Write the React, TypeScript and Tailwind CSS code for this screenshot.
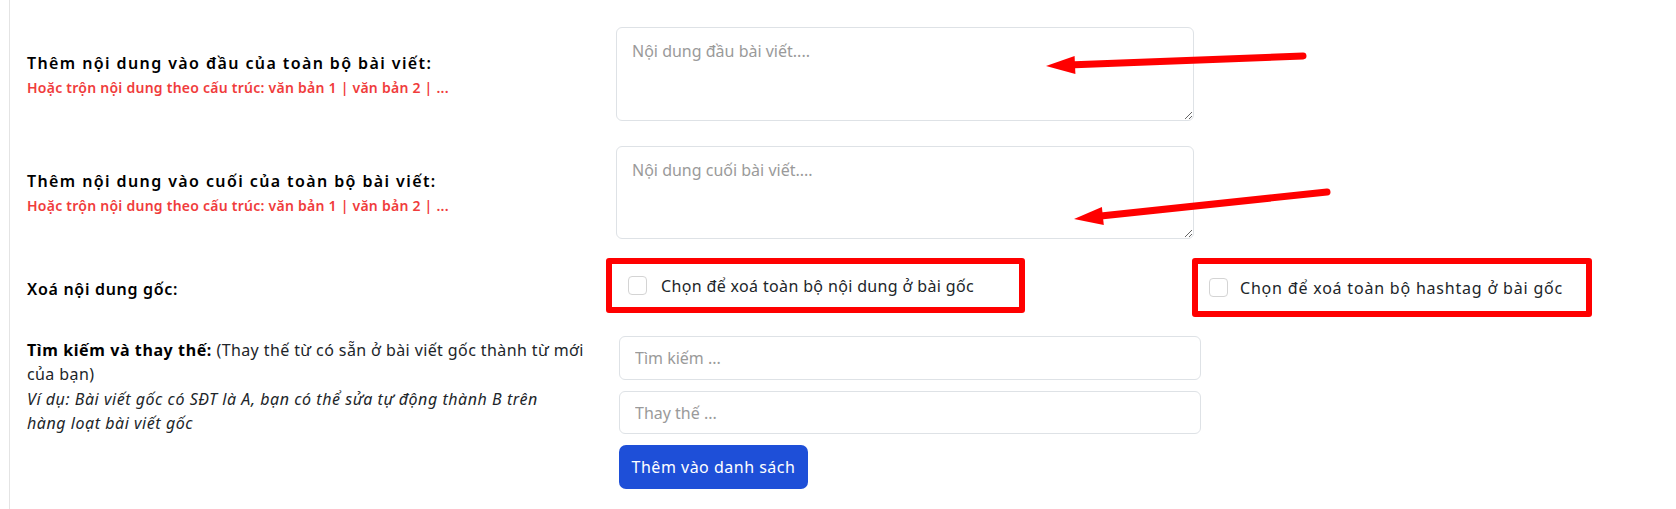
export default function App() {
  return (
    <div className="relative h-[509px] w-full overflow-hidden bg-white font-['Noto_Sans',sans-serif] text-black">
      <div className="ml-[9px] h-full border-l border-[#e4e4e4] pl-[17px] pt-[27px]">
        {/* Nội dung đầu */}
        <div className="flex items-center">
          <div className="w-[589px]">
            <div className="text-[16px] font-semibold leading-[22px] tracking-[1.4px]">Thêm nội dung vào đầu của toàn bộ bài viết:</div>
            <div className="mt-[5px] text-[14px] font-semibold leading-[18px] tracking-[0.25px] text-[#f03c3c]">
              Hoặc trộn nội dung theo cấu trúc: văn bản 1 | văn bản 2 | ...
            </div>
          </div>
          <textarea
            placeholder="Nội dung đầu bài viết...."
            className="h-[94px] w-[578px] rounded-[6px] border border-[#dee2e6] px-[15px] py-[11px] text-[16px] leading-[24px] outline-none placeholder:text-[#9a9a9a]"
          />
        </div>

        {/* Nội dung cuối */}
        <div className="mt-[25px] flex items-center">
          <div className="w-[589px]">
            <div className="text-[16px] font-semibold leading-[22px] tracking-[1.4px]">Thêm nội dung vào cuối của toàn bộ bài viết:</div>
            <div className="mt-[5px] text-[14px] font-semibold leading-[18px] tracking-[0.25px] text-[#f03c3c]">
              Hoặc trộn nội dung theo cấu trúc: văn bản 1 | văn bản 2 | ...
            </div>
          </div>
          <textarea
            placeholder="Nội dung cuối bài viết...."
            className="h-[93px] w-[578px] rounded-[6px] border border-[#dee2e6] px-[15px] py-[11px] text-[16px] leading-[24px] outline-none placeholder:text-[#9a9a9a]"
          />
        </div>

        {/* Xoá nội dung gốc */}
        <div className="mt-[19px] flex items-start">
          <div className="flex h-[59px] w-[579px] items-center pt-[2px] text-[16px] font-semibold tracking-[0.7px]">Xoá nội dung gốc:</div>
          <label className="flex h-[55px] w-[419px] items-center gap-[14px] rounded-[3px] border-[6px] border-[#ff0000] pl-[16px] text-[16px] tracking-[0.35px] text-[#212529]">
            <input type="checkbox" className="h-[19px] w-[19px] appearance-none rounded-[4px] border border-[#d4d4d4] bg-white" />
            Chọn để xoá toàn bộ nội dung ở bài gốc
          </label>
          <label className="ml-[167px] flex h-[59px] w-[400px] items-center gap-[12px] rounded-[3px] border-[6px] border-[#ff0000] pl-[11px] text-[16px] tracking-[0.8px] text-[#212529]">
            <input type="checkbox" className="h-[19px] w-[19px] appearance-none rounded-[4px] border border-[#d4d4d4] bg-white" />
            Chọn để xoá toàn bộ hashtag ở bài gốc
          </label>
        </div>

        {/* Tìm kiếm và thay thế */}
        <div className="mt-[19px] flex items-start">
          <div className="mt-[2px] w-[592px] whitespace-nowrap text-[16px] leading-[24.3px] tracking-[0.4px] text-[#212529]">
            <span className="font-bold tracking-[0.6px] text-black">Tìm kiếm và thay thế:</span> (Thay thế từ có sẵn ở bài viết gốc thành từ mới
            <br />
            của bạn)
            <br />
            <i className="tracking-[0.55px]">Ví dụ: Bài viết gốc có SĐT là A, bạn có thể sửa tự động thành B trên</i>
            <br />
            <i className="tracking-[0.55px]">hàng loạt bài viết gốc</i>
          </div>
          <div className="flex w-[582px] flex-col">
            <input
              placeholder="Tìm kiếm ..."
              className="h-[44px] rounded-[6px] border border-[#dee2e6] px-[15px] text-[16px] outline-none placeholder:text-[#9a9a9a]"
            />
            <input
              placeholder="Thay thế ..."
              className="mt-[11px] h-[43px] rounded-[6px] border border-[#dee2e6] px-[15px] text-[16px] outline-none placeholder:text-[#9a9a9a]"
            />
            <button className="mt-[11px] h-[44px] w-[189px] rounded-[7px] bg-[#1e4fd8] text-[16px] tracking-[0.5px] text-white">
              Thêm vào danh sách
            </button>
          </div>
        </div>
      </div>

      {/* red annotation arrows */}
      <svg className="pointer-events-none absolute left-0 top-0" width="1676" height="509">
        <line x1="1303" y1="56" x2="1068" y2="65" stroke="#ff0000" strokeWidth="7" strokeLinecap="round" />
        <polygon points="1046,66 1075.4,73.9 1074.6,55.9" fill="#ff0000" />
        <line x1="1327" y1="192" x2="1096" y2="216.6" stroke="#ff0000" strokeWidth="7" strokeLinecap="round" />
        <polygon points="1074,219 1103.8,224.9 1101.9,207" fill="#ff0000" />
      </svg>
    </div>
  );
}
